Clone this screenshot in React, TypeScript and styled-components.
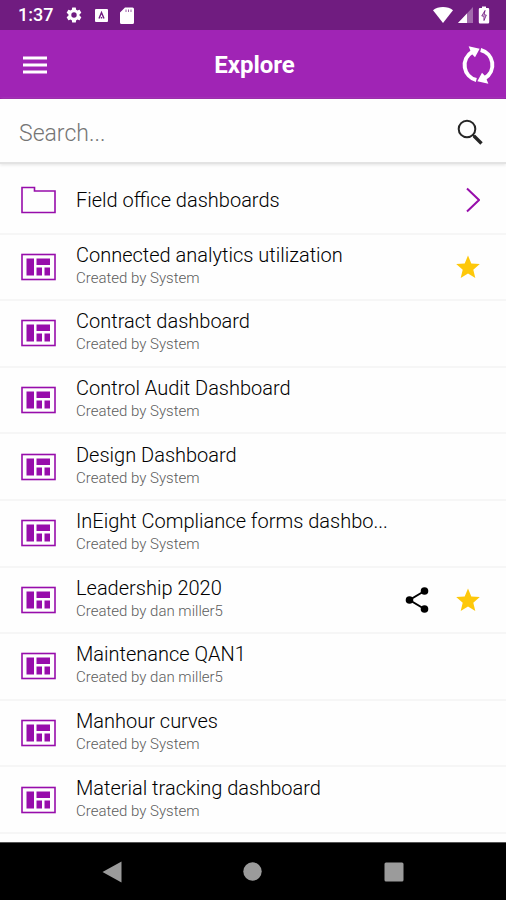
import React from "react";
import styled, { createGlobalStyle } from "styled-components";

const purple = "#970dab";

const GlobalStyle = createGlobalStyle`
  *, *::before, *::after { box-sizing: border-box; }
  body { margin: 0; background: #fff; font-family: Roboto, "Noto Sans", sans-serif; color: #000; }
  button, input { font: inherit; color: inherit; }
  svg { display: block; flex: none; }
`;

const Page = styled.div`
  display: flex;
  flex-direction: column;
  min-height: 100vh;
  background: #fefefe;
`;

const StatusBar = styled.div`
  display: flex;
  align-items: center;
  justify-content: space-between;
  height: 30px;
  padding: 0 16px 0 18px;
  background: #701c80;
  color: #fff;
`;

const StatusGroup = styled.div<{ $gap: number }>`
  display: flex;
  align-items: center;
  gap: ${(p) => p.$gap}px;
`;

const Clock = styled.time`
  font-size: 18px;
  line-height: 32px;
  font-weight: 500;
`;

const Header = styled.header`
  display: grid;
  grid-template-columns: 60px 1fr 60px;
  align-items: center;
  height: 69px;
  padding: 2px 9px 0 12px;
  background: #a024b5;
  border-bottom: 1px solid #8c0a9e;
  color: #fff;
`;

const Title = styled.h1`
  margin: 0;
  text-align: center;
  font-size: 24px;
  line-height: 32px;
  font-weight: 700;
`;

const IconButton = styled.button<{ $align?: string }>`
  display: flex;
  align-items: center;
  justify-content: ${(p) => p.$align ?? "center"};
  flex: none;
  min-height: 44px;
  padding: 0;
  border: 0;
  background: none;
  cursor: pointer;
`;

const MenuButton = styled(IconButton)`
  width: 46px;
`;

const SearchForm = styled.form`
  display: flex;
  align-items: center;
  height: 65px;
  padding: 2px 23px 0 19px;
  background: #fefefe;
  border-bottom: 2px solid #e3e3e3;
  box-shadow: 0 1px 3px #e4e4e4;
`;

const SearchInput = styled.input`
  flex: 1;
  min-width: 0;
  padding: 4px 0 0;
  border: 0;
  outline: 0;
  background: none;
  font-size: 23px;
  line-height: 32px;
  font-weight: 300;
  &::placeholder { color: #757575; opacity: 1; }
`;

const List = styled.ul`
  display: flex;
  flex-direction: column;
  flex: 1;
  margin: 0;
  padding: 4px 0 8px;
  list-style: none;
`;

const Row = styled.li`
  display: flex;
  flex: 1 0 66px;
  align-items: center;
  padding: 0 26px 0 20px;
  border-bottom: 2px solid #f6f6f6;
`;

const Entry = styled.a`
  display: flex;
  flex: 1;
  min-width: 0;
  align-items: center;
  gap: 20px;
  color: inherit;
  text-decoration: none;
`;

const Labels = styled.span`
  display: flex;
  flex-direction: column;
  min-width: 0;
`;

const Name = styled.span`
  overflow: hidden;
  text-overflow: ellipsis;
  white-space: nowrap;
  font-size: 20px;
  line-height: 26px;
  font-weight: 300;
`;

const Author = styled.span`
  padding-bottom: 4px;
  color: #5c5c5c;
  font-size: 15px;
  line-height: 20px;
  font-weight: 300;
`;

const Actions = styled.span`
  display: flex;
  flex: none;
  align-items: center;
  justify-content: flex-end;
  gap: 27px;
  width: 90px;
`;

const NavBar = styled.nav`
  display: grid;
  grid-template-columns: repeat(3, 1fr);
  justify-items: center;
  height: 58px;
  padding: 0 42px;
  background: #000;
  border-top: 1px solid #555;
`;

const GearIcon = () => (
  <svg width="18" height="18" viewBox="0 0 24 24" fill="currentColor" aria-hidden="true">
    <path d="M19.4 13c.04-.3.06-.65.06-1s-.02-.7-.07-1l2.1-1.65c.2-.15.25-.42.13-.64l-2-3.46c-.12-.22-.4-.3-.6-.22l-2.5 1c-.5-.4-1.07-.73-1.7-.98l-.37-2.65A.5.5 0 0 0 14 2h-4a.5.5 0 0 0-.5.42l-.37 2.65c-.62.25-1.18.6-1.7.98l-2.48-1a.5.5 0 0 0-.61.22l-2 3.46c-.13.22-.08.5.12.64L4.57 11a8 8 0 0 0 0 2l-2.1 1.65c-.2.15-.25.42-.13.64l2 3.46c.12.22.4.3.6.22l2.5-1c.5.4 1.07.73 1.7.98l.37 2.65c.03.24.24.4.49.4h4c.25 0 .46-.16.5-.42l.37-2.65c.62-.25 1.18-.6 1.7-.98l2.48 1c.23.08.5 0 .61-.22l2-3.46c.13-.22.08-.5-.12-.64zM12 15.6a3.6 3.6 0 1 1 0-7.2 3.6 3.6 0 0 1 0 7.2z" />
  </svg>
);

const BadgeIcon = () => (
  <svg width="13" height="13" viewBox="0 0 13 13" aria-hidden="true">
    <rect width="13" height="13" rx="1" fill="#fff" />
    <path d="M4 9.5 6.5 3.5 9 9.5M6.5 8v1.5" fill="none" stroke="#701c80" strokeWidth="1.4" />
  </svg>
);

const CardIcon = () => (
  <svg width="14" height="17" viewBox="0 0 14 17" aria-hidden="true">
    <path d="M5 0.5h7.5A1.5 1.5 0 0 1 14 2v13.500a1.500 1.500 0 0 1-1.500 1.500h-11A1.500 1.500 0 0 1 0 15.500V5.500z" fill="#fff" />
    <path d="M6 2.500v2.500M8.500 2.500v2.500M11 2.500v2.500" stroke="#701c80" strokeWidth="1" opacity="0.7" />
  </svg>
);

const WifiIcon = () => (
  <svg width="20" height="16" viewBox="0 0 20 16" fill="#fff" aria-hidden="true">
    <path d="M0 3.200C2.600 1 6.200 0 10 0s7.400 1 10 3.200L10 16z" />
  </svg>
);

const SignalIcon = () => (
  <svg width="15" height="16" viewBox="0 0 15 16" fill="#fff" aria-hidden="true">
    <path d="M15 0v16H0z" opacity="0.35" />
    <path d="M9 6.400V16H0z" />
  </svg>
);

const BatteryIcon = () => (
  <svg width="12" height="18" viewBox="0 0 12 18" aria-hidden="true">
    <path d="M4 0.500h4v1.500h2A1.200 1.200 0 0 1 11.200 3.200v13.100a1.200 1.200 0 0 1-1.200 1.200H2A1.200 1.200 0 0 1 .8 16.300V3.200A1.200 1.200 0 0 1 2 2h2z" fill="#fff" />
    <path d="M7 4.500 3.800 10H6v4.500L8.300 9H6z" fill="#fff" stroke="#701c80" strokeWidth="0.900" />
  </svg>
);

const MenuIcon = () => (
  <svg width="24" height="18" viewBox="0 0 24 18" fill="#fff" aria-hidden="true">
    <path d="M0 0.500h24v3H0zM0 7.500h24v3H0zM0 14.500h24v3H0z" />
  </svg>
);

const SyncIcon = () => (
  <svg width="37" height="40" viewBox="27 44 111 120" aria-hidden="true">
    <path d="M76 149A46 46 0 0 1 63 65M89 59A46 46 0 0 1 102 143" fill="none" stroke="#fff" strokeWidth="12" />
    <path d="M53 48 86 55 72 81 62 70zM112 160 79 153 93 127 103 138z" fill="#fff" />
  </svg>
);

const SearchIcon = () => (
  <svg width="26" height="26" viewBox="0 0 26 26" fill="none" stroke="#262626" aria-hidden="true">
    <circle cx="10" cy="10" r="8.300" strokeWidth="2" />
    <path d="M15.500 15.500 18 18" strokeWidth="2" />
    <path d="M17 17l7.500 7.500" strokeWidth="3.400" />
  </svg>
);

const FolderIcon = () => (
  <svg width="36" height="28" viewBox="0 0 36 28" fill="none" stroke={purple} strokeWidth="1.600" aria-hidden="true">
    <path d="M2 1.500H14.500V5H35V26.500H2z" />
  </svg>
);

const DashboardIcon = () => (
  <svg width="36" height="28" viewBox="0 0 36 28" fill={purple} aria-hidden="true">
    <rect x="2" y="1.500" width="33" height="25" fill="none" stroke={purple} strokeWidth="1.600" />
    <path d="M6.500 5.500h7.500v17H6.500zM16.500 5.500h13.500v6.500H16.500zM16.500 14.500h5.500v8h-5.500zM24.500 14.500h5.500v8h-5.500z" />
  </svg>
);

const ChevronIcon = () => (
  <svg width="14" height="26" viewBox="0 0 14 26" fill="none" stroke={purple} strokeWidth="2" aria-hidden="true">
    <path d="M1 1.500 13 13 1 24.500" />
  </svg>
);

const StarIcon = () => (
  <svg width="24" height="24" viewBox="0 0 24 24" fill="#fec80a" aria-hidden="true">
    <path d="M12 .5l3.300 7.900 8.500.7-6.500 5.600 2 8.300L12 18.600 4.700 23l2-8.300L.2 9.100l8.500-.7z" />
  </svg>
);

const ShareIcon = () => (
  <svg width="24" height="26" viewBox="0 0 24 26" aria-hidden="true">
    <path d="M19.500 4 4.500 13l15 9" fill="none" stroke="#000" strokeWidth="2" />
    <circle cx="19.500" cy="4" r="3.800" />
    <circle cx="4.500" cy="13" r="3.800" />
    <circle cx="19.500" cy="22" r="3.800" />
  </svg>
);

type Dashboard = { name: string; author: string; shared?: boolean; starred?: boolean };

const dashboards: Dashboard[] = [
  { name: "Connected analytics utilization", author: "System", starred: true },
  { name: "Contract dashboard", author: "System" },
  { name: "Control Audit Dashboard", author: "System" },
  { name: "Design Dashboard", author: "System" },
  { name: "InEight Compliance forms dashbo...", author: "System" },
  { name: "Leadership 2020", author: "dan miller5", shared: true, starred: true },
  { name: "Maintenance QAN1", author: "dan miller5" },
  { name: "Manhour curves", author: "System" },
  { name: "Material tracking dashboard", author: "System" },
];

export default function App() {
  return (
    <Page>
      <GlobalStyle />
      <StatusBar>
        <StatusGroup $gap={12}>
          <Clock>1:37</Clock>
          <GearIcon />
          <BadgeIcon />
          <CardIcon />
        </StatusGroup>
        <StatusGroup $gap={5}>
          <WifiIcon />
          <SignalIcon />
          <BatteryIcon />
        </StatusGroup>
      </StatusBar>
      <Header>
        <MenuButton type="button" aria-label="Menu"><MenuIcon /></MenuButton>
        <Title>Explore</Title>
        <IconButton type="button" aria-label="Refresh" $align="flex-end"><SyncIcon /></IconButton>
      </Header>
      <SearchForm role="search" onSubmit={(e) => e.preventDefault()}>
        <SearchInput type="text" aria-label="Search" placeholder="Search..." />
        <IconButton type="submit" aria-label="Submit search"><SearchIcon /></IconButton>
      </SearchForm>
      <List>
        <Row>
          <Entry href="#folder">
            <FolderIcon />
            <Labels><Name>Field office dashboards</Name></Labels>
          </Entry>
          <Actions><ChevronIcon /></Actions>
        </Row>
        {dashboards.map((d) => (
          <Row key={d.name}>
            <Entry href="#dashboard">
              <DashboardIcon />
              <Labels>
                <Name>{d.name}</Name>
                <Author>Created by {d.author}</Author>
              </Labels>
            </Entry>
            <Actions>
              {d.shared && <IconButton type="button" aria-label={`Share ${d.name}`}><ShareIcon /></IconButton>}
              {d.starred && <IconButton type="button" aria-label={`Unstar ${d.name}`}><StarIcon /></IconButton>}
            </Actions>
          </Row>
        ))}
      </List>
      <NavBar aria-label="System">
        <IconButton type="button" aria-label="Back">
          <svg width="20" height="22" viewBox="0 0 20 22" fill="#9b9b9b"><path d="M0.500 11 19.500 0.500v21z" /></svg>
        </IconButton>
        <IconButton type="button" aria-label="Home">
          <svg width="19" height="19" viewBox="0 0 19 19" fill="#9b9b9b"><circle cx="9.500" cy="9.500" r="9.200" /></svg>
        </IconButton>
        <IconButton type="button" aria-label="Recent apps">
          <svg width="20" height="20" viewBox="0 0 20 20" fill="#9b9b9b"><rect x="0.500" y="0.500" width="19" height="19" rx="1.500" /></svg>
        </IconButton>
      </NavBar>
    </Page>
  );
}
